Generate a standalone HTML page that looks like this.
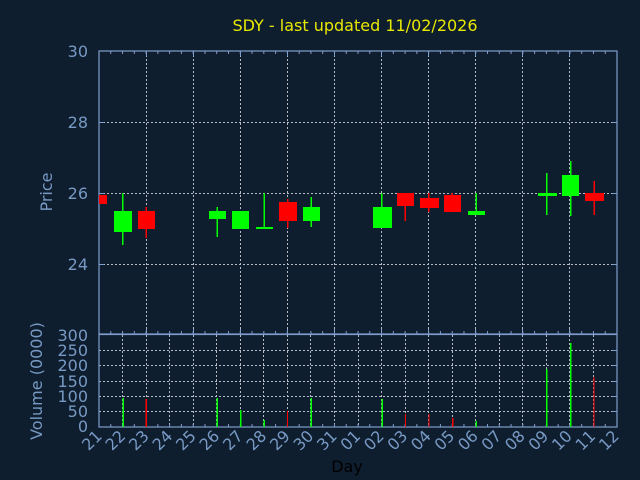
<!DOCTYPE html>
<html><head><meta charset="utf-8"><style>
html,body{margin:0;padding:0;background:#0f1e2e;}
svg{display:block;font-family:"DejaVu Sans","Liberation Sans",sans-serif;}
</style></head><body>
<svg width="640" height="480" viewBox="0 0 640 480" xmlns="http://www.w3.org/2000/svg">
<rect width="640" height="480" fill="#0f1e2e"/>
<text x="355" y="31" fill="#e8e800" font-size="16" text-anchor="middle">SDY - last updated 11/02/2026</text>

<!-- price grid -->
<g stroke="#b8bcc4" stroke-width="1" stroke-dasharray="2 2" fill="none">
<path d="M99 122.5H617M99 193.5H617M99 264.5H617"/>
<path d="M146.5 51V334M193.5 51V334M240.5 51V334M287.5 51V334M334.5 51V334M381.5 51V334M428.5 51V334M475.5 51V334M522.5 51V334M569.5 51V334"/>
<!-- volume grid -->
<path d="M99 350.5H617M99 365.5H617M99 381.5H617M99 396.5H617M99 411.5H617"/>
<path d="M122.5 335V427M146.5 335V427M169.5 335V427M193.5 335V427M216.5 335V427M240.5 335V427M263.5 335V427M287.5 335V427M310.5 335V427M334.5 335V427M358.5 335V427M381.5 335V427M405.5 335V427M428.5 335V427M452.5 335V427M475.5 335V427M499.5 335V427M522.5 335V427M546.5 335V427M569.5 335V427M593.5 335V427"/>
</g>

<!-- axes -->
<g stroke="#7e9ccc" fill="none" stroke-width="1.2">
<rect x="99" y="51" width="518" height="283"/>
<rect x="99" y="334.5" width="518" height="92.5"/>
</g>
<!-- ticks -->
<g stroke="#7e9ccc" stroke-width="3" stroke-dasharray="1 10.773" fill="none">
<line x1="98.5" y1="52.5" x2="617" y2="52.5"/>
<line x1="98.5" y1="332.5" x2="617" y2="332.5"/>
<line x1="98.5" y1="425.5" x2="617" y2="425.5"/>
</g>
<g stroke="#7e9ccc" stroke-width="1" fill="none">
<path d="M146.5 329V334M193.5 329V334M240.5 329V334M287.5 329V334M334.5 329V334M381.5 329V334M428.5 329V334M475.5 329V334M522.5 329V334M569.5 329V334"/>
<path d="M146.5 51V56M193.5 51V56M240.5 51V56M287.5 51V56M334.5 51V56M381.5 51V56M428.5 51V56M475.5 51V56M522.5 51V56M569.5 51V56"/>
<path d="M99 122.5H104M99 193.5H104M99 264.5H104M612 122.5H617M612 193.5H617M612 264.5H617"/>
<path d="M612 350.5H617M612 365.5H617M612 381.5H617M612 396.5H617M612 411.5H617"/>
</g>

<!-- candles -->
<g>
<rect x="99" y="195" width="8" height="9" fill="#ff0000"/>
<rect x="122" y="193" width="1.5" height="52" fill="#00ff00"/><rect x="114" y="211" width="18" height="21" fill="#00ff00"/>
<rect x="145.5" y="207" width="1.5" height="31" fill="#ff0000"/><rect x="138" y="211" width="17" height="18" fill="#ff0000"/>
<rect x="216.5" y="207" width="1.5" height="30" fill="#00ff00"/><rect x="209" y="211" width="17" height="8" fill="#00ff00"/>
<rect x="232" y="211" width="17" height="18" fill="#00ff00"/>
<rect x="263.5" y="193" width="1.5" height="36" fill="#00ff00"/><rect x="256" y="227" width="17" height="2" fill="#00ff00"/>
<rect x="287" y="199" width="1.5" height="29" fill="#ff0000"/><rect x="279" y="202" width="18" height="19" fill="#ff0000"/>
<rect x="310.5" y="197" width="1.5" height="30" fill="#00ff00"/><rect x="303" y="207" width="17" height="14" fill="#00ff00"/>
<rect x="381" y="193" width="1.5" height="35" fill="#00ff00"/><rect x="373" y="207" width="19" height="21" fill="#00ff00"/>
<rect x="404.5" y="193" width="1.5" height="28" fill="#ff0000"/><rect x="397" y="193" width="17" height="13" fill="#ff0000"/>
<rect x="428" y="193" width="1.5" height="19" fill="#ff0000"/><rect x="420" y="198" width="19" height="10" fill="#ff0000"/>
<rect x="451.5" y="193" width="1.5" height="19" fill="#ff0000"/><rect x="444" y="195" width="17" height="17" fill="#ff0000"/>
<rect x="475.5" y="193" width="1.5" height="22" fill="#00ff00"/><rect x="468" y="211" width="17" height="4" fill="#00ff00"/>
<rect x="546" y="173" width="1.5" height="42" fill="#00ff00"/><rect x="538" y="193" width="19" height="3" fill="#00ff00"/>
<rect x="570" y="161" width="1.5" height="55" fill="#00ff00"/><rect x="562" y="175" width="17" height="21" fill="#00ff00"/>
<rect x="593.5" y="181" width="1.5" height="34" fill="#ff0000"/><rect x="585" y="193" width="19" height="8" fill="#ff0000"/>
</g>

<!-- volume bars -->
<g>
<rect x="122.5" y="398" width="1.5" height="29" fill="#00ff00"/>
<rect x="145.5" y="399" width="1.5" height="28" fill="#ff0000"/>
<rect x="216.5" y="398" width="1.5" height="29" fill="#00ff00"/>
<rect x="240" y="410" width="1.5" height="17" fill="#00ff00"/>
<rect x="263.5" y="420" width="1.5" height="7" fill="#00ff00"/>
<rect x="287" y="411" width="1" height="16" fill="#ff0000"/>
<rect x="310.5" y="398" width="1.5" height="29" fill="#00ff00"/>
<rect x="381.5" y="399" width="1.5" height="28" fill="#00ff00"/>
<rect x="405" y="414" width="1" height="13" fill="#ff0000"/>
<rect x="428.5" y="414" width="1" height="13" fill="#ff0000"/>
<rect x="452" y="418" width="1.5" height="9" fill="#ff0000"/>
<rect x="475.5" y="421" width="1.5" height="6" fill="#00ff00"/>
<rect x="546" y="369" width="1.5" height="58" fill="#00ff00"/>
<rect x="570" y="343" width="1.5" height="84" fill="#00ff00"/>
<rect x="593.5" y="377" width="1" height="50" fill="#ff0000"/>
</g>

<!-- y labels -->
<g fill="#7799c4" font-size="16" text-anchor="end">
<text x="88" y="57">30</text>
<text x="88" y="128">28</text>
<text x="88" y="199">26</text>
<text x="88" y="270">24</text>
<text x="88" y="341">300</text>
<text x="88" y="356">250</text>
<text x="88" y="371">200</text>
<text x="88" y="387">150</text>
<text x="88" y="402">100</text>
<text x="88" y="417">50</text>
<text x="88" y="432">0</text>
</g>
<g fill="#7799c4" font-size="16" text-anchor="middle">
<text transform="translate(52,192) rotate(-90)">Price</text>
<text transform="translate(42,381) rotate(-90)">Volume (0000)</text>
</g>
<text x="347" y="472" fill="#000" font-size="16" text-anchor="middle">Day</text>

<!-- x labels -->
<g fill="#7799c4" font-size="16" text-anchor="end">
<text transform="translate(103,437) rotate(-45)">21</text>
<text transform="translate(126.5,437) rotate(-45)">22</text>
<text transform="translate(150,437) rotate(-45)">23</text>
<text transform="translate(173.5,437) rotate(-45)">24</text>
<text transform="translate(197,437) rotate(-45)">25</text>
<text transform="translate(220.5,437) rotate(-45)">26</text>
<text transform="translate(244,437) rotate(-45)">27</text>
<text transform="translate(267.5,437) rotate(-45)">28</text>
<text transform="translate(291,437) rotate(-45)">29</text>
<text transform="translate(314.5,437) rotate(-45)">30</text>
<text transform="translate(338,437) rotate(-45)">31</text>
<text transform="translate(361.5,437) rotate(-45)">01</text>
<text transform="translate(385,437) rotate(-45)">02</text>
<text transform="translate(408.5,437) rotate(-45)">03</text>
<text transform="translate(432,437) rotate(-45)">04</text>
<text transform="translate(455.5,437) rotate(-45)">05</text>
<text transform="translate(479,437) rotate(-45)">06</text>
<text transform="translate(502.5,437) rotate(-45)">07</text>
<text transform="translate(526,437) rotate(-45)">08</text>
<text transform="translate(549.5,437) rotate(-45)">09</text>
<text transform="translate(573,437) rotate(-45)">10</text>
<text transform="translate(596.5,437) rotate(-45)">11</text>
<text transform="translate(620,437) rotate(-45)">12</text>
</g>
</svg>
</body></html>
